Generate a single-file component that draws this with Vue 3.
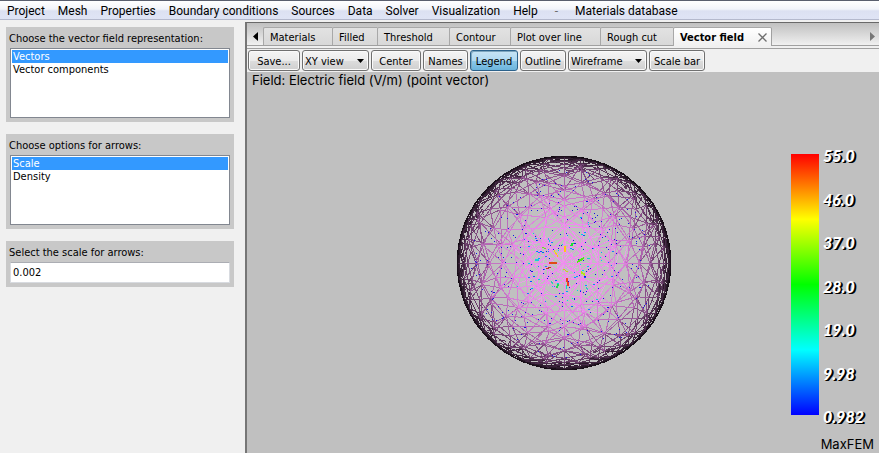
<script setup>
import { ref } from 'vue'

const menus = ['Project', 'Mesh', 'Properties', 'Boundary conditions', 'Sources', 'Data', 'Solver', 'Visualization', 'Help']
const tabs = ['Materials', 'Filled', 'Threshold', 'Contour', 'Plot over line', 'Rough cut', 'Vector field']
const activeTab = ref('Vector field')
const representation = ref('Vectors')
const option = ref('Scale')
const scale = ref('0.002')
const legendOn = ref(true)
const ticks = ['55.0', '46.0', '37.0', '28.0', '19.0', '9.98', '0.982']

let seed = 20117
function rand() {
  seed = (seed * 16807) % 2147483647
  return seed / 2147483647
}

const R = 107
const C = 108

// Wireframe of a half sphere: octahedron faces split n times and pushed out to the surface.
function buildShell(n, jitter) {
  const nodes = {}
  const s = v => Math.sin((v / n) * Math.PI / 2)
  function node(i, j, k) {
    const key = i + ',' + j
    if (!nodes[key]) {
      let x = s(i)
      let y = s(j)
      const z = s(k)
      if (k !== 0 && i !== 0) x += (rand() - 0.5) * jitter
      if (k !== 0 && j !== 0) y += (rand() - 0.5) * jitter
      const l = Math.hypot(x, y, z)
      nodes[key] = [x / l, y / l, z / l]
    }
    return nodes[key]
  }
  const lines = []
  const add = (a, b) => lines.push({ a, b, depth: (a[2] + b[2]) / 2 })
  for (const sx of [-1, 1]) {
    for (const sy of [-1, 1]) {
      for (let i = 0; i < n; i++) {
        for (let j = 0; i + j < n; j++) {
          const k = n - i - j
          const p = node(i * sx, j * sy, k)
          const q = node((i + 1) * sx, j * sy, k - 1)
          const r = node(i * sx, (j + 1) * sy, k - 1)
          add(p, q)
          add(p, r)
          add(q, r)
          // The second diagonal of a pair of faces.
          if (k > 1 && (i + j) % 2 === 0) add(p, node((i + 1) * sx, (j + 1) * sy, k - 2))
        }
      }
    }
  }
  return lines
}

// Edges of the outer layer of elements, crowded together towards the silhouette.
function buildRim(count) {
  const lines = []
  for (let n = 0; n < count; n++) {
    const t = rand() * Math.PI * 2
    const u = t + (rand() - 0.5) * 0.3
    const r1 = 0.87 + rand() * 0.13
    const r2 = Math.min(1, r1 + (rand() - 0.4) * 0.12)
    const z = Math.sqrt(Math.max(0, 1 - ((r1 + r2) / 2) ** 2))
    lines.push({
      a: [Math.cos(t) * r1, Math.sin(t) * r1],
      b: [Math.cos(u) * r2, Math.sin(u) * r2],
      depth: z * 0.8
    })
  }
  return lines
}

function shade(depth) {
  const t = Math.min(1, Math.max(0.08, depth * 1.08))
  return `rgb(${Math.round(238 * t)},${Math.round(140 * t)},${Math.round(238 * t)})`
}

const mesh = [...buildShell(8, 0.13), ...buildShell(10, 0.07), ...buildRim(150)]
  .sort((m, n) => m.depth - n.depth)
  .map(e => ({
    d: `M${(C + e.a[0] * R).toFixed(1)} ${(C + e.a[1] * R).toFixed(1)}L${(C + e.b[0] * R).toFixed(1)} ${(C + e.b[1] * R).toFixed(1)}`,
    stroke: shade(e.depth)
  }))

// Short chords through the volume, seen as faint lines near the centre.
const chords = []
for (let n = 0; n < 130; n++) {
  const a = rand() * Math.PI * 2
  const r = rand() * 60
  const b = rand() * Math.PI * 2
  const l = 8 + rand() * 10
  const x = C + Math.cos(a) * r
  const y = C + Math.sin(a) * r
  chords.push(`M${x.toFixed(1)} ${y.toFixed(1)}l${(Math.cos(b) * l).toFixed(1)} ${(Math.sin(b) * l).toFixed(1)}`)
}
const chordPath = chords.join('')

const dots = []
for (let n = 0; n < 400; n++) {
  const a = rand() * Math.PI * 2
  const r = 12 + Math.pow(rand(), 0.85) * 82
  const near = r < 52 && rand() < 0.45
  const color = near ? ['#0060ff', '#00a0ff', '#1e78ff', '#00d0e8'][Math.floor(rand() * 4)] : '#1414e6'
  dots.push({
    x: Math.round(C + Math.cos(a) * r),
    y: Math.round(C + Math.sin(a) * r),
    w: near && rand() < 0.5 ? 2 : 1,
    color
  })
}

const arrows = [
  { d: 'M93 108h8', c: '#e04a18', w: 2 },
  { d: 'M90 114l5-2', c: '#b83a20', w: 1 },
  { d: 'M98 95l4 7', c: '#ffc814', w: 1 },
  { d: 'M109 91v6', c: '#ffc814', w: 2 },
  { d: 'M111 123l1 8', c: '#f03c1e', w: 2 },
  { d: 'M115 91l2-3', c: '#14e632', w: 2 },
  { d: 'M86 92l4 2', c: '#6edc1e', w: 1 },
  { d: 'M121 107l7-4', c: '#50e614', w: 2 },
  { d: 'M125 117l4 3', c: '#b4e614', w: 2 },
  { d: 'M107 114l5 3', c: '#c8d214', w: 1 },
  { d: 'M101 133l1-4', c: '#1edc50', w: 2 },
  { d: 'M79 105h4', c: '#14d2dc', w: 2 },
  { d: 'M92 83l2 4', c: '#1eb4e6', w: 1 },
  { d: 'M110 130l1 4', c: '#14d2c8', w: 1 },
  { d: 'M131 103h3', c: '#14d2c8', w: 1 },
  { d: 'M130 132l2 3', c: '#32d2b4', w: 1 },
  { d: 'M95 126l2 3', c: '#28d2aa', w: 1 }
]
</script>

<template>
  <div class="window">
    <nav class="menubar">
      <button v-for="m in menus" :key="m" type="button">{{ m }}</button>
      <span class="dash">-</span>
      <button type="button">Materials database</button>
    </nav>

    <div class="body">
      <aside class="side">
        <section class="group">
          <label for="representation">Choose the vector field representation:</label>
          <select id="representation" v-model="representation" class="listbox" size="5">
            <option>Vectors</option>
            <option>Vector components</option>
          </select>
        </section>
        <section class="group">
          <label for="arrow-option">Choose options for arrows:</label>
          <select id="arrow-option" v-model="option" class="listbox" size="5">
            <option>Scale</option>
            <option>Density</option>
          </select>
        </section>
        <section class="group">
          <label for="arrow-scale">Select the scale for arrows:</label>
          <input id="arrow-scale" v-model="scale" type="text">
        </section>
      </aside>

      <main class="work">
        <div class="tabstrip">
          <button class="nudge" type="button" aria-label="Previous tab">
            <svg width="5" height="9" viewBox="0 0 5 9"><path d="M5 0v9L0 4.500z" fill="#000" /></svg>
          </button>
          <div class="tabs" role="tablist">
            <div v-for="t in tabs" :key="t" class="tab" :class="{ active: t === activeTab }">
              <button type="button" role="tab" :aria-selected="t === activeTab" @click="activeTab = t">{{ t }}</button>
              <button v-if="t === activeTab" class="close" type="button" aria-label="Close tab">
                <svg width="9" height="9" viewBox="0 0 9 9"><path d="M.5.5l8 8M8.500.5l-8 8" stroke="#6e6e6e" stroke-width="1.300" fill="none" /></svg>
              </button>
            </div>
          </div>
          <button class="nudge next" type="button" aria-label="Next tab">
            <svg width="5" height="9" viewBox="0 0 5 9"><path d="M0 0v9L5 4.500z" fill="#777" /></svg>
          </button>
        </div>

        <div class="toolbar">
          <button class="tool" type="button">Save...</button>
          <div class="drop">
            <select class="tool" aria-label="View"><option>XY view</option></select>
            <svg width="7" height="4" viewBox="0 0 7 4"><path d="M0 0h7L3.500 4z" /></svg>
          </div>
          <button class="tool" type="button">Center</button>
          <button class="tool" type="button">Names</button>
          <button class="tool" :class="{ pressed: legendOn }" type="button" @click="legendOn = !legendOn">Legend</button>
          <button class="tool" type="button">Outline</button>
          <div class="drop">
            <select class="tool" aria-label="Surface style"><option>Wireframe</option></select>
            <svg width="7" height="4" viewBox="0 0 7 4"><path d="M0 0h7L3.500 4z" /></svg>
          </div>
          <button class="tool" type="button">Scale bar</button>
        </div>

        <div class="scene">
          <p class="caption">Field: Electric field (V/m) (point vector)</p>
          <svg class="sphere" width="216" height="216" viewBox="-1 0 216 216" shape-rendering="crispEdges" fill="none">
            <path :d="chordPath" stroke="#e6a0e6" />
            <path v-for="(e, i) in mesh" :key="i" :d="e.d" :stroke="e.stroke" />
            <circle cx="108" cy="108" r="106.500" stroke="#1c101c" />
            <rect v-for="(p, i) in dots" :key="'p' + i" :x="p.x" :y="p.y" :width="p.w" height="1" :fill="p.color" />
            <path v-for="(a, i) in arrows" :key="'a' + i" :d="a.d" :stroke="a.c" :stroke-width="a.w" />
          </svg>
          <div v-if="legendOn" class="legend">
            <div class="ramp"></div>
            <div class="ticks">
              <span v-for="t in ticks" :key="t">{{ t }}</span>
            </div>
          </div>
          <p class="brand">MaxFEM</p>
        </div>
      </main>
    </div>
  </div>
</template>

<style>
body {
  background: #f0f0f0;
}
</style>

<style scoped>
.window {
  display: flex;
  flex-direction: column;
  min-height: 100vh;
  background: #f0f0f0;
  color: #000;
  font: 11px/13px "DejaVu Sans Condensed", "Noto Sans", sans-serif;
}
button,
select,
input {
  margin: 0;
  padding: 0;
  border: 0;
  border-radius: 0;
  background: none;
  color: inherit;
  font: inherit;
  outline: none;
}
p {
  margin: 0;
}
svg {
  display: block;
}
.menubar {
  display: flex;
  gap: 13px;
  box-sizing: border-box;
  height: 20px;
  padding: 1px 7px 0;
  border-top: 1px solid #5a5f6e;
  border-bottom: 1px solid #b4b9cd;
  background: linear-gradient(#fff 0, #f2f4fa 45%, #dce1f2 55%, #dfe4f5 100%);
  font: 12px/18px Roboto, sans-serif;
  white-space: nowrap;
}
.dash {
  padding: 0 4px;
  color: #6d6d6d;
}
.body {
  display: flex;
  flex: 1;
}
.side {
  display: flex;
  flex-direction: column;
  flex: none;
  gap: 12px;
  box-sizing: border-box;
  width: 245px;
  padding: 7px 11px 7px 6px;
}
.group {
  display: flex;
  flex-direction: column;
  gap: 3px;
  padding: 5px 4px 4px;
  background: #c8c8c8;
}
.group label {
  margin-left: -1px;
}
.listbox {
  box-sizing: border-box;
  height: 70px;
  padding: 1px;
  border: 1px solid #828790;
  background: #fff;
  overflow: hidden;
}
.listbox option {
  min-height: 13px;
  padding: 0 1px;
  line-height: 13px;
}
.listbox option:checked {
  background: #3399ff linear-gradient(#3399ff, #3399ff);
  color: #fff;
  -webkit-text-fill-color: #fff;
}
.group input {
  box-sizing: border-box;
  height: 21px;
  padding: 0 2px;
  border: 1px solid #d8dbe0;
  border-top-color: #abadb3;
  background: #fff;
}
.work {
  display: flex;
  flex: 1;
  flex-direction: column;
  min-width: 0;
  margin-top: 2px;
  border-top: 1px solid #696969;
  border-left: 2px solid #767676;
}
.tabstrip {
  display: flex;
  align-items: flex-end;
  height: 22px;
  border-bottom: 1px solid #a0a0a0;
  background: linear-gradient(#c0c0c0, #f0f0f0);
}
.nudge {
  display: flex;
  flex: none;
  align-items: center;
  justify-content: center;
  width: 16px;
  height: 18px;
}
.next {
  margin-left: auto;
}
.next svg {
  margin-left: 3px;
}
.tabs {
  display: grid;
  grid-template-columns: 69px 45px 72px 61px 90px 73px 99px;
}
.tab {
  display: flex;
  align-items: center;
  justify-content: space-between;
  box-sizing: border-box;
  height: 18px;
  padding: 1px 4px 0 6px;
  border-top: 1px solid #a8a8a8;
  border-left: 1px solid #a8a8a8;
  border-top-left-radius: 2px;
  background: linear-gradient(#e2e2e2, #d8d8d8);
  white-space: nowrap;
}
.tab.active {
  height: 19px;
  margin-bottom: -1px;
  border-right: 1px solid #a0a0a0;
  border-radius: 2px 2px 0 0;
  background: linear-gradient(#fff, #f0f0f0);
  font-weight: bold;
}
.toolbar {
  display: grid;
  grid-template-columns: 52px 67px 50px 45px 48px 46px 79px 56px;
  gap: 2px;
  padding: 1px;
  border-top: 1px solid #a0a0a0;
  margin-top: 2px;
  background: #f0f0f0;
}
.tool {
  box-sizing: border-box;
  width: 100%;
  height: 21px;
  padding-top: 1px;
  border: 1px solid #707070;
  border-radius: 3px;
  background: linear-gradient(#f4f4f4 0, #ebebeb 50%, #dddddd 51%, #cfcfcf 100%);
  box-shadow: inset 0 0 0 1px #fafafa;
  white-space: nowrap;
}
.pressed {
  border-color: #2c628b;
  background: linear-gradient(#c8e4f4 0, #b0daf2 50%, #8cc8ea 51%, #6cb4dc 100%);
  box-shadow: inset 1px 1px 0 #7ea6be;
}
.drop {
  position: relative;
}
.drop select {
  padding: 1px 2px 0;
  appearance: none;
}
.drop svg {
  position: absolute;
  top: 9px;
  right: 5px;
  pointer-events: none;
}
.scene {
  position: relative;
  display: flex;
  flex: 1;
  align-items: center;
  justify-content: center;
  min-height: 260px;
  background: #c0c0c0;
}
.caption,
.brand {
  position: absolute;
  font: 13px/16px Inter, sans-serif;
}
.caption {
  top: 0;
  left: 5px;
}
.brand {
  right: 5px;
  bottom: 1px;
}
.legend {
  position: absolute;
  top: 82px;
  right: 16px;
  bottom: 38px;
  display: flex;
  gap: 4px;
}
.ramp {
  width: 28px;
  background: linear-gradient(#f00, #ff0 25%, #0f0 50%, #0ff 75%, #00f);
}
.ticks {
  display: flex;
  flex-direction: column;
  justify-content: space-between;
  width: 40px;
  margin: -7px 0 -11px;
  color: #fff;
  font: italic 900 16px/18px Lato, sans-serif;
  text-shadow: 1px 1px 0 #000, 2px 1px 0 #000;
}
</style>
